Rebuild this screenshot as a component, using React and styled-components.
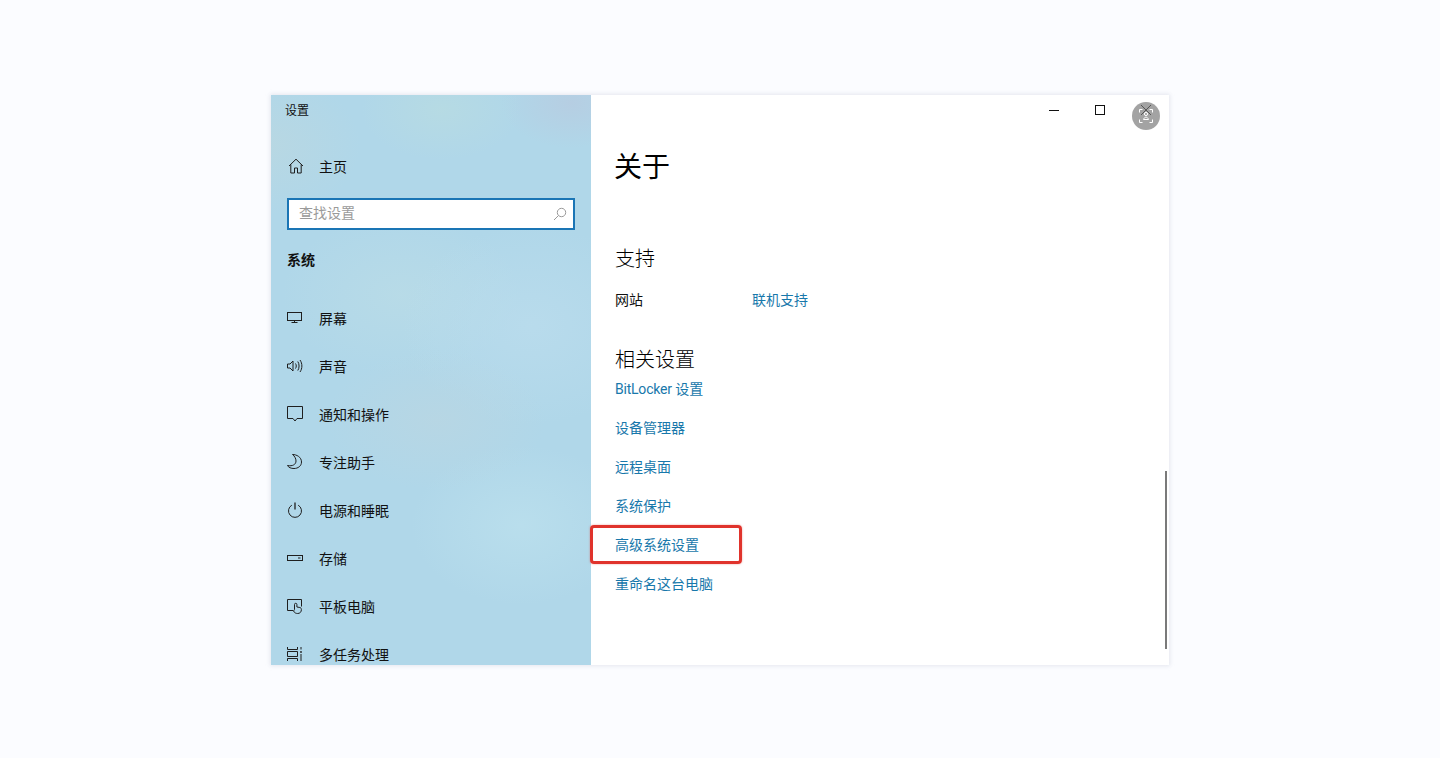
import React from "react";
import styled, { createGlobalStyle } from "styled-components";

const Global = createGlobalStyle`
  html, body { margin: 0; padding: 0; height: 100%; background: #fbfcff; }
  body { font-family: Roboto, "Noto Sans CJK SC", sans-serif; }
  #root { height: 758px; overflow: hidden; }
`;

const Page = styled.div`
  height: 758px;
  display: flex;
  justify-content: center;
  align-items: flex-start;
  padding-top: 95px;
  box-sizing: border-box;
`;

const Win = styled.div`
  width: 898px;
  height: 570px;
  display: flex;
  position: relative;
  overflow: hidden;
  background: #fff;
  box-shadow: 0 0 4px 1px rgba(190, 195, 210, 0.35);
`;

const Sidebar = styled.aside`
  width: 320px;
  flex: none;
  display: flex;
  flex-direction: column;
  overflow: hidden;
  color: #111;
  background:
    radial-gradient(80px 50px at 170px 15px, rgba(188, 222, 222, 0.5), transparent),
    radial-gradient(70px 45px at 300px 8px, rgba(186, 200, 222, 0.6), transparent),
    radial-gradient(90px 70px at 0px 50px, rgba(190, 216, 222, 0.55), transparent),
    radial-gradient(110px 70px at 165px 325px, rgba(186, 214, 226, 0.7), transparent),
    radial-gradient(130px 100px at 260px 230px, rgba(190, 222, 238, 0.6), transparent),
    radial-gradient(110px 80px at 250px 430px, rgba(190, 226, 238, 0.65), transparent),
    radial-gradient(120px 80px at 130px 200px, rgba(190, 222, 230, 0.55), transparent),
    #b0d7e9;
`;

const SideTitle = styled.div`
  height: 30px;
  flex: none;
  box-sizing: border-box;
  display: flex;
  align-items: center;
  padding: 0 0 2px 14px;
  font-size: 12px;
`;

const HomeRow = styled.div`
  height: 48px;
  margin-top: 17px;
  flex: none;
  display: flex;
  align-items: center;
  padding-left: 17px;
  gap: 15px;
  font-size: 14px;
`;

const IconBox = styled.span`
  width: 16px;
  height: 16px;
  flex: none;
  display: block;
  svg { display: block; width: 16px; height: 16px; fill: none; stroke: #1f1f1f; stroke-width: 1; }
`;

const SearchBox = styled.div`
  margin: 8px 16px 0;
  height: 32px;
  flex: none;
  box-sizing: border-box;
  border: 2px solid #1a75b5;
  background: #fff;
  display: flex;
  align-items: center;
  justify-content: space-between;
  padding: 0 6px 0 10px;
  color: #9a9a9a;
  font-size: 14px;
  svg { display: block; width: 14px; height: 14px; fill: none; stroke: #9a9a9a; stroke-width: 1; }
`;

const SearchHint = styled.span`
  line-height: 24px;
  margin-bottom: 3px;
`;

const Group = styled.div`
  margin: 18px 0 0 16px;
  height: 24px;
  flex: none;
  line-height: 24px;
  font-size: 14px;
  font-weight: 700;
`;

const Nav = styled.nav`
  margin-top: 22px;
  display: flex;
  flex-direction: column;
`;

const NavItem = styled.div`
  height: 48px;
  flex: none;
  display: flex;
  align-items: center;
  padding-left: 16px;
  gap: 16px;
  font-size: 14px;
`;

const Main = styled.main`
  flex: 1;
  display: flex;
  flex-direction: column;
  min-width: 0;
`;

const TitleBar = styled.div`
  height: 30px;
  flex: none;
  display: flex;
  justify-content: flex-end;
`;

const WinBtn = styled.div`
  width: 46px;
  height: 30px;
  display: flex;
  align-items: center;
  justify-content: center;
  svg { display: block; width: 10px; height: 10px; fill: none; stroke: #111; stroke-width: 1; }
`;

const Body = styled.div`
  padding-left: 24px;
  display: flex;
  flex-direction: column;
  align-items: flex-start;
`;

const H1 = styled.h1`
  margin: 23px 0 0 -1px;
  height: 40px;
  line-height: 40px;
  font-size: 28px;
  font-weight: 400;
  color: #000;
`;

const H2 = styled.h2`
  margin: ${(p) => p.$top}px 0 0;
  height: 28px;
  line-height: 28px;
  font-size: 20px;
  font-weight: 300;
  color: #000;
`;

const SupportRow = styled.div`
  margin-top: 13px;
  display: flex;
  height: 28px;
  line-height: 28px;
  font-size: 14px;
  color: #111;
`;

const SupportLabel = styled.span`
  width: 137px;
`;

const Link = styled.span`
  color: #1878ab;
  font-size: 14px;
`;

const Latin = styled.span`
  letter-spacing: -0.22px;
`;

const LinkList = styled.div`
  margin-top: -5px;
  display: flex;
  flex-direction: column;
`;

const LinkRow = styled.div`
  height: 39px;
  line-height: 39px;
  position: relative;
`;

const Highlight = styled.span`
  position: absolute;
  left: -25px;
  top: 0;
  width: 152px;
  height: 39px;
  box-sizing: border-box;
  border: 3px solid #e0332c;
  border-radius: 4px;
  box-shadow: 0 0 2px rgba(224, 51, 44, 0.5);
  pointer-events: none;
`;

const Scrollbar = styled.div`
  position: absolute;
  right: 2px;
  top: 376px;
  width: 2px;
  height: 178px;
  background: #7a7a7a;
`;

const ScanBadge = styled.div`
  position: absolute;
  left: 861px;
  top: 7px;
  width: 28px;
  height: 28px;
  border-radius: 50%;
  background: rgba(120, 120, 120, 0.68);
  display: flex;
  align-items: center;
  justify-content: center;
  svg { display: block; width: 14px; height: 14px; fill: none; stroke: #fff; stroke-width: 1; }
`;

const icons = {
  monitor: <><rect x="0.5" y="2.5" width="14" height="8" /><path d="M7.500 10.500v2M4.500 12.500h6" /></>,
  sound: <><path d="M0.500 6v4h2.500l3 3V3L3 6z" /><path d="M8.500 5.500c1 1.500 1 3.500 0 5M10.800 3.500c1.700 2.500 1.700 6.500 0 9M13 2c2.500 3.500 2.500 8.500 0 12" /></>,
  notify: <path d="M0.500 0.500h15v12h-5.500L8 15 6 12.500H0.500z" />,
  moon: <path d="M5.500 0.500c4 0 9 2.500 9 7.500 0 4-3.500 6.500-7.500 6.500-3 0-5.500-1-6.500-3 5 1 8.500-1 8.500-4.500C9 4.500 7.500 2 5.500 0.500z" />,
  power: <><path d="M8 0.500v7" strokeWidth="1.300" /><path d="M4.800 3.200a6.500 6.500 0 1 0 6.400 0" /></>,
  storage: <><rect x="0.500" y="5.500" width="15" height="5" /><path d="M11 8h2.500" /></>,
  tablet: <><path d="M6 12.500H0.500V1.500h14v7" /><path d="M7.500 11.500V6.500a1.200 1.200 0 0 1 2.400 0V9l3 .5c1 .2 1.500 1 1.500 2 0 2.500-1.500 4-3.700 4-1.800 0-3.300-.7-4.200-2.500z" /></>,
  tasks: <><path d="M0.500 1v2.500h10V1M0.500 15v-2.500h10V15M0.500 5.500h10v5h-10z" /><path d="M14 1v2.500M14 8v7" /><circle cx="14" cy="6" r="0.900" fill="#1f1f1f" stroke="none" /></>,
};

const navItems = [
  ["monitor", "屏幕"],
  ["sound", "声音"],
  ["notify", "通知和操作"],
  ["moon", "专注助手"],
  ["power", "电源和睡眠"],
  ["storage", "存储"],
  ["tablet", "平板电脑"],
  ["tasks", "多任务处理"],
];

const links = [
  <><Latin>BitLocker</Latin> 设置</>,
  "设备管理器",
  "远程桌面",
  "系统保护",
  "高级系统设置",
  "重命名这台电脑",
];

export default function App() {
  return (
    <Page>
      <Global />
      <Win>
        <Sidebar>
          <SideTitle>设置</SideTitle>
          <HomeRow>
            <IconBox>
              <svg viewBox="0 0 16 16"><path d="M1 8L8 1.200 15 8M2.800 6.500v8.500h3.700v-5h3v5h3.700V6.500" /></svg>
            </IconBox>
            主页
          </HomeRow>
          <SearchBox>
            <SearchHint>查找设置</SearchHint>
            <svg viewBox="0 0 14 14"><circle cx="8.500" cy="5.500" r="4.200" /><path d="M5.500 8.500L1 13" /></svg>
          </SearchBox>
          <Group>系统</Group>
          <Nav>
            {navItems.map(([k, t]) => (
              <NavItem key={k}>
                <IconBox><svg viewBox="0 0 16 16">{icons[k]}</svg></IconBox>
                {t}
              </NavItem>
            ))}
          </Nav>
        </Sidebar>
        <Main>
          <TitleBar>
            <WinBtn><svg viewBox="0 0 10 10"><path d="M0 5.500h10" /></svg></WinBtn>
            <WinBtn><svg viewBox="0 0 10 10"><rect x="0.500" y="0.500" width="9" height="9" /></svg></WinBtn>
            <WinBtn><svg viewBox="0 0 10 10"><path d="M0 0l10 10M10 0L0 10" /></svg></WinBtn>
          </TitleBar>
          <Body>
            <H1>关于</H1>
            <H2 $top={57}>支持</H2>
            <SupportRow>
              <SupportLabel>网站</SupportLabel>
              <Link>联机支持</Link>
            </SupportRow>
            <H2 $top={32}>相关设置</H2>
            <LinkList>
              {links.map((t, i) => (
                <LinkRow key={i}>
                  <Link>{t}</Link>
                  {i === 4 && <Highlight />}
                </LinkRow>
              ))}
            </LinkList>
          </Body>
        </Main>
        <Scrollbar />
        <ScanBadge>
          <svg viewBox="0 0 14 14">
            <path d="M0.500 3.500v-3h3M10.500 0.500h3v3M13.500 10.500v3h-3M3.500 13.500h-3v-3" />
            <circle cx="7" cy="5" r="1.600" />
            <path d="M4.500 10.500c.4-1.500 1.400-2.300 2.500-2.300s2.100.8 2.500 2.300z" />
          </svg>
        </ScanBadge>
      </Win>
    </Page>
  );
}
